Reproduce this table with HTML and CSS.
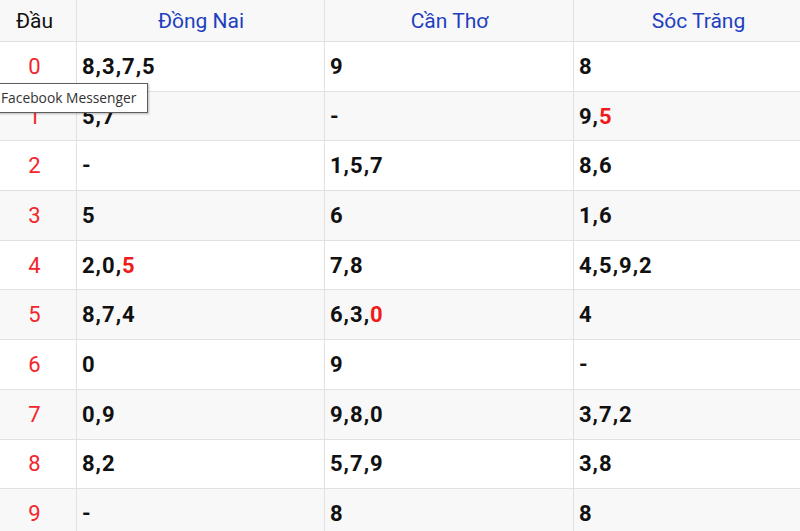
FILE: index.html
```html
<!DOCTYPE html>
<html lang="vi">
<head>
<meta charset="utf-8">
<title>Lô tô đầu</title>
<link rel="stylesheet" href="styles.css">
</head>
<body>
<div class="wrap">
<table class="kq">
  <colgroup>
    <col class="c0"><col class="c1"><col class="c2"><col class="c3">
  </colgroup>
  <thead>
    <tr><th class="dau">Đầu</th><th>Đồng Nai</th><th>Cần Thơ</th><th>Sóc Trăng</th></tr>
  </thead>
  <tbody>
    <tr><td class="d">0</td><td>8,3,7,5</td><td>9</td><td>8</td></tr>
    <tr><td class="d">1</td><td>5,7</td><td>-</td><td>9,<span class="r">5</span></td></tr>
    <tr><td class="d">2</td><td>-</td><td>1,5,7</td><td>8,6</td></tr>
    <tr><td class="d">3</td><td>5</td><td>6</td><td>1,6</td></tr>
    <tr><td class="d">4</td><td>2,0,<span class="r">5</span></td><td>7,8</td><td>4,5,9,2</td></tr>
    <tr><td class="d">5</td><td>8,7,4</td><td>6,3,<span class="r">0</span></td><td>4</td></tr>
    <tr><td class="d">6</td><td>0</td><td>9</td><td>-</td></tr>
    <tr><td class="d">7</td><td>0,9</td><td>9,8,0</td><td>3,7,2</td></tr>
    <tr><td class="d">8</td><td>8,2</td><td>5,7,9</td><td>3,8</td></tr>
    <tr><td class="d">9</td><td>-</td><td>8</td><td>8</td></tr>
  </tbody>
</table>
<div class="tip">Facebook Messenger</div>
</div>
</body>
</html>
```
FILE: styles.css
```css
html, body {
  margin: 0;
  padding: 0;
  background: #fff;
  overflow: hidden;
}
.wrap {
  position: relative;
  width: 800px;
  height: 531px;
  overflow: hidden;
}
.kq {
  border-collapse: collapse;
  margin-left: -8px;
  width: 830px;
  table-layout: fixed;
  font-family: Roboto, "Liberation Sans", sans-serif;
}
.c0 { width: 84px; }
.c1 { width: 248px; }
.c2 { width: 249px; }
.c3 { width: 249px; }
.kq th, .kq td {
  border: 1px solid #e1e1e1;
  padding: 0 4px 0 5px;
}
.kq thead tr { background: #f8f8f8; }
.kq thead th {
  border-top: none;
  height: 41px;
  font-weight: 400;
  font-size: 21px;
  color: #1e40c0;
  text-align: center;
}
.kq thead th.dau { color: #111; padding: 0 4px; }
.kq tbody td {
  height: 48.7px;
  font-size: 22px;
  font-weight: 700;
  letter-spacing: 1px;
  color: #111;
}
.kq tbody tr:nth-child(even) { background: #f8f8f8; }
.kq tbody td.d {
  text-align: center;
  font-weight: 400;
  letter-spacing: 0;
  color: #f2262c;
  padding: 0 4px;
}
.r { color: #f01b1b; }
.tip {
  position: absolute;
  left: -4px;
  top: 83px;
  width: 146px;
  height: 28px;
  box-sizing: content-box;
  border: 1px solid #5e5e5e;
  background: #fff;
  box-shadow: 1px 1px 2px rgba(0,0,0,0.25);
  font-family: "Open Sans", "Noto Sans", sans-serif;
  font-size: 13.8px;
  line-height: 28px;
  color: #333;
  padding-left: 4px;
  white-space: nowrap;
}
```
